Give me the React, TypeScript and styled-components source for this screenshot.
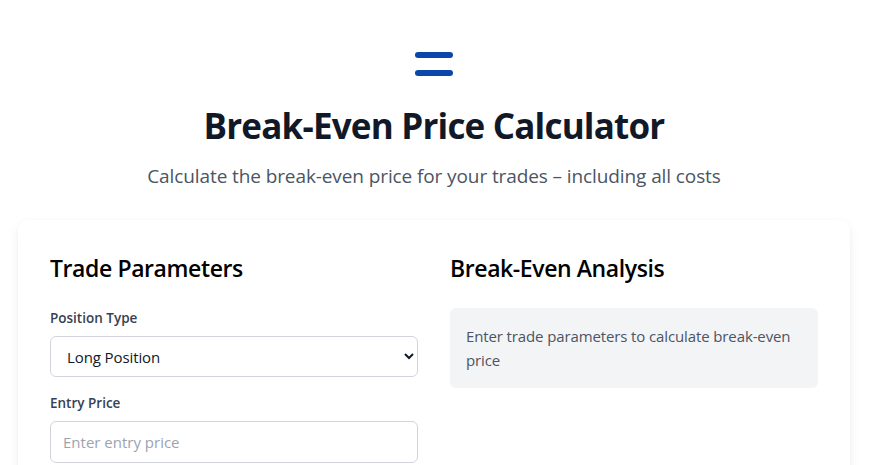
import React from "react";
import styled, { createGlobalStyle } from "styled-components";

const Global = createGlobalStyle`
  body {
    margin: 0;
    background: #ffffff;
    font-family: "Open Sans", "Noto Sans", sans-serif;
    color: #111827;
  }
  * { box-sizing: border-box; }
`;

const Page = styled.div`
  width: 868px;
  padding: 52px 0 0;
  display: flex;
  flex-direction: column;
  align-items: center;
`;

const Logo = styled.div`
  width: 38px;
  height: 24px;
  display: flex;
  margin-bottom: 28px;
`;

const Title = styled.h1`
  margin: 0;
  font-size: 35px;
  font-weight: 700;
  line-height: 44px;
  color: #111827;
  letter-spacing: -0.8px;
`;

const Subtitle = styled.p`
  margin: 14px 0 0;
  font-size: 19px;
  line-height: 28px;
  color: #4b5563;
  letter-spacing: -0.1px;
`;

const Card = styled.div`
  width: 832px;
  margin-top: 30px;
  background: #ffffff;
  border-radius: 10px;
  box-shadow: 0 4px 12px rgba(0, 0, 0, 0.06), 0 1px 3px rgba(0, 0, 0, 0.04);
  padding: 32px;
  display: grid;
  grid-template-columns: 1fr 1fr;
  gap: 32px;
  min-height: 300px;
`;

const Column = styled.div`
  display: flex;
  flex-direction: column;
`;

const SectionTitle = styled.h2`
  margin: 0 0 24px;
  font-size: 23px;
  font-weight: 600;
  line-height: 32px;
  color: #000000;
  letter-spacing: -0.4px;
`;

const Field = styled.div`
  display: flex;
  flex-direction: column;
  margin-bottom: 16px;
`;

const Label = styled.label`
  font-size: 13.5px;
  font-weight: 600;
  line-height: 20px;
  color: #374151;
  margin-bottom: 8px;
`;

const Select = styled.select`
  height: 41px;
  padding: 0 10px 0 12px;
  font-family: inherit;
  font-size: 15px;
  letter-spacing: -0.1px;
  color: #111827;
  background: #ffffff;
  border: 1px solid #d1d5db;
  border-radius: 6px;
`;

const Input = styled.input`
  height: 42px;
  padding: 0 12px;
  font-family: inherit;
  font-size: 15px;
  color: #111827;
  border: 1px solid #d1d5db;
  border-radius: 6px;
  &::placeholder { color: #9ca3af; }
`;

const Notice = styled.div`
  background: #f3f4f6;
  border-radius: 6px;
  padding: 16px;
  font-size: 15px;
  line-height: 24px;
  letter-spacing: -0.12px;
  color: #4b5563;
`;

export default function App() {
  return (
    <>
      <Global />
      <Page>
        <Logo>
          <svg width="38" height="24" viewBox="0 0 38 24">
            <rect x="0" y="0" width="38" height="6" rx="3" fill="#0a47a8" />
            <rect x="0" y="18" width="38" height="6" rx="3" fill="#0a47a8" />
          </svg>
        </Logo>
        <Title>Break-Even Price Calculator</Title>
        <Subtitle>Calculate the break-even price for your trades – including all costs</Subtitle>
        <Card>
          <Column>
            <SectionTitle>Trade Parameters</SectionTitle>
            <Field>
              <Label>Position Type</Label>
              <Select defaultValue="long">
                <option value="long">Long Position</option>
                <option value="short">Short Position</option>
              </Select>
            </Field>
            <Field>
              <Label>Entry Price</Label>
              <Input placeholder="Enter entry price" />
            </Field>
          </Column>
          <Column>
            <SectionTitle>Break-Even Analysis</SectionTitle>
            <Notice>Enter trade parameters to calculate break-even price</Notice>
          </Column>
        </Card>
      </Page>
    </>
  );
}
